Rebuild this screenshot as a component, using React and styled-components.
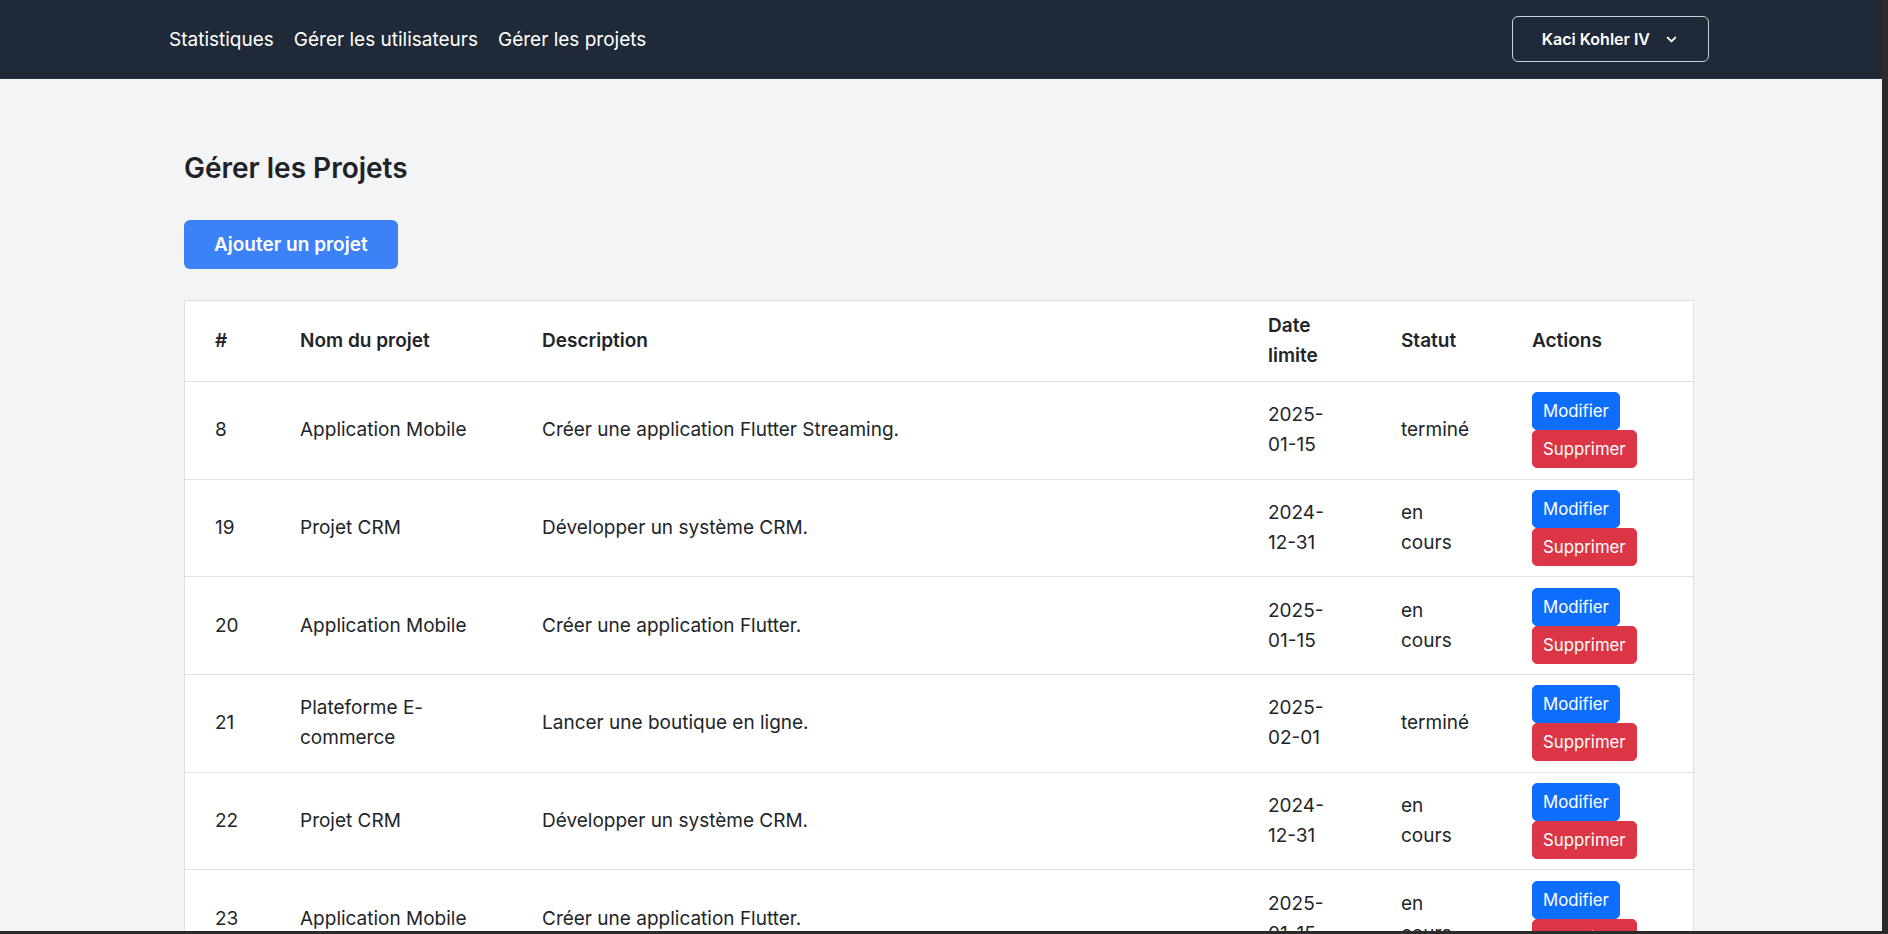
import React from "react";
import styled, { createGlobalStyle } from "styled-components";

const GlobalStyle = createGlobalStyle`
  html, body {
    margin: 0;
    padding: 0;
    height: 100%;
    overflow: hidden;
    background: #2b2b2b;
  }
  body {
    font-family: Inter, "Noto Sans", "Liberation Sans", sans-serif;
    color: #212529;
  }
  * { box-sizing: border-box; }
`;

const Frame = styled.div`
  height: 100vh;
  border-right: 6px solid #2b2b2b;
  border-bottom: 3px solid #2b2b2b;
  background: #f3f4f6;
  overflow: hidden;
  display: flex;
  flex-direction: column;
`;

const Navbar = styled.nav`
  flex: none;
  height: 79px;
  background: #1f2937;
  border-bottom: 1px solid #28313f;
  padding-right: 4px;
`;

const NavInner = styled.div`
  width: 1540px;
  height: 100%;
  margin: 0 auto;
  display: flex;
  align-items: center;
  justify-content: space-between;
`;

const NavLinks = styled.div`
  display: flex;
  align-items: center;
  gap: 20px;
  padding-top: 2px;
`;

const NavLink = styled.a`
  color: #ffffff;
  font-size: 19px;
  font-weight: 400;
  text-decoration: none;
  line-height: 1.2;
`;

const UserButton = styled.button`
  display: flex;
  align-items: center;
  height: 46px;
  padding: 0 27px 0 29px;
  background: transparent;
  border: 1px solid #cbd0d8;
  border-radius: 6px;
  color: #ffffff;
  font-family: inherit;
  font-size: 16px;
  font-weight: 600;
  cursor: pointer;
`;

const Chevron = styled.svg`
  width: 19px;
  height: 19px;
  margin-left: 12px;
  fill: currentColor;
`;

const Main = styled.main`
  flex: 1;
  padding: 74px 4px 0 0;
`;

const Container = styled.div`
  width: 1510px;
  margin: 0 auto;
`;

const Title = styled.h2`
  margin: 0;
  font-size: 28px;
  line-height: 31px;
  font-weight: 600;
  color: #1f2328;
`;

const AddButton = styled.button`
  display: inline-block;
  margin-top: 36px;
  height: 49px;
  padding: 0 30px;
  background: #3b82f6;
  border: none;
  border-radius: 6px;
  color: #ffffff;
  font-family: inherit;
  font-size: 19px;
  font-weight: 600;
  cursor: pointer;
`;

const Card = styled.div`
  margin-top: 31px;
  background: #ffffff;
  border: 1px solid #dee2e6;
`;

const Table = styled.table`
  width: 100%;
  border-collapse: collapse;
  table-layout: fixed;
  font-size: 19px;
  line-height: 30px;
`;

const Th = styled.th`
  text-align: left;
  font-weight: 600;
  padding: 10px 30px;
  vertical-align: middle;
  border-bottom: 1px solid #dee2e6;
  color: #212529;
`;

const Td = styled.td`
  padding: 10.35px 30px;
  vertical-align: middle;
  border-bottom: 1px solid #dee2e6;
  color: #212529;
  font-weight: 400;
`;

const Actions = styled.div`
  display: flex;
  flex-wrap: wrap;
  align-items: flex-start;
`;

const SmallButton = styled.button`
  display: inline-block;
  padding: 5px 10px;
  border: 1px solid ${(p) => p.$bg};
  background: ${(p) => p.$bg};
  border-radius: 5px;
  color: #ffffff;
  font-family: inherit;
  font-size: 16.8px;
  line-height: 26px;
  font-weight: 400;
  cursor: pointer;
`;

const columns = [
  { label: "#", width: 85 },
  { label: "Nom du projet", width: 242 },
  { label: "Description", width: 726 },
  { label: "Date limite", width: 133 },
  { label: "Statut", width: 131 },
  { label: "Actions", width: 191 },
];

const projects = [
  { id: 8, name: "Application Mobile", desc: "Créer une application Flutter Streaming.", date: "2025-01-15", status: "terminé" },
  { id: 19, name: "Projet CRM", desc: "Développer un système CRM.", date: "2024-12-31", status: "en cours" },
  { id: 20, name: "Application Mobile", desc: "Créer une application Flutter.", date: "2025-01-15", status: "en cours" },
  { id: 21, name: "Plateforme E-commerce", desc: "Lancer une boutique en ligne.", date: "2025-02-01", status: "terminé" },
  { id: 22, name: "Projet CRM", desc: "Développer un système CRM.", date: "2024-12-31", status: "en cours" },
  { id: 23, name: "Application Mobile", desc: "Créer une application Flutter.", date: "2025-01-15", status: "en cours" },
  { id: 24, name: "Plateforme E-commerce", desc: "Lancer une boutique en ligne.", date: "2025-02-01", status: "terminé" },
];

export default function App() {
  return (
    <>
      <GlobalStyle />
      <Frame>
        <Navbar>
          <NavInner>
            <NavLinks>
              <NavLink href="#">Statistiques</NavLink>
              <NavLink href="#">Gérer les utilisateurs</NavLink>
              <NavLink href="#">Gérer les projets</NavLink>
            </NavLinks>
            <UserButton>
              Kaci Kohler IV
              <Chevron viewBox="0 0 20 20">
                <path
                  fillRule="evenodd"
                  clipRule="evenodd"
                  d="M5.293 7.293a1 1 0 011.414 0L10 10.586l3.293-3.293a1 1 0 111.414 1.414l-4 4a1 1 0 01-1.414 0l-4-4a1 1 0 010-1.414z"
                />
              </Chevron>
            </UserButton>
          </NavInner>
        </Navbar>
        <Main>
          <Container>
            <Title>Gérer les Projets</Title>
            <AddButton>Ajouter un projet</AddButton>
            <Card>
              <Table>
                <colgroup>
                  {columns.map((c) => (
                    <col key={c.label} style={{ width: c.width }} />
                  ))}
                </colgroup>
                <thead>
                  <tr>
                    {columns.map((c) => (
                      <Th key={c.label}>{c.label}</Th>
                    ))}
                  </tr>
                </thead>
                <tbody>
                  {projects.map((p) => (
                    <tr key={p.id}>
                      <Td>{p.id}</Td>
                      <Td>{p.name}</Td>
                      <Td>{p.desc}</Td>
                      <Td>{p.date}</Td>
                      <Td>{p.status}</Td>
                      <Td>
                        <Actions>
                          <SmallButton $bg="#0d6efd">Modifier</SmallButton>
                          <SmallButton $bg="#dc3545">Supprimer</SmallButton>
                        </Actions>
                      </Td>
                    </tr>
                  ))}
                </tbody>
              </Table>
            </Card>
          </Container>
        </Main>
      </Frame>
    </>
  );
}
